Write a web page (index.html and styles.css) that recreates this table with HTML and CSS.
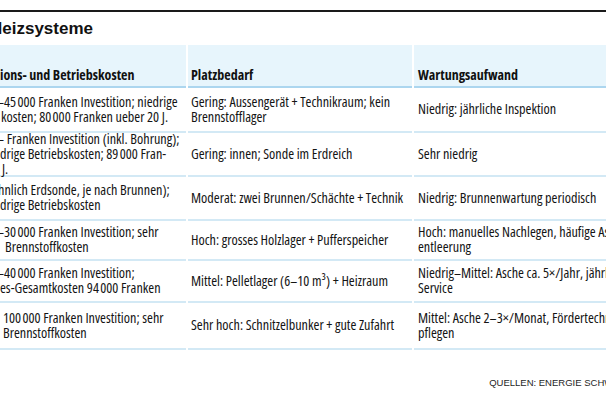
FILE: index.html
```html
<!DOCTYPE html>
<html lang="de">
<head>
<meta charset="utf-8">
<title>Heizsysteme</title>
<link rel="stylesheet" href="styles.css">
</head>
<body>
<div class="page">
  <div class="rule"></div>
  <h2 class="title">Heizsysteme</h2>
  <div class="grid">
    <div class="cell head c1">ions- und Betriebskosten</div>
    <div class="cell head c2">Platzbedarf</div>
    <div class="cell head c3">Wartungsaufwand</div>

    <div class="cell c1"><span class="ln cut">–45&#8239;000 Franken Investition; niedrige</span><span class="ln in1">kosten; 80&#8239;000 Franken ueber 20 J.</span></div>
    <div class="cell c2"><span class="ln">Gering: Aussengerät + Technikraum; kein</span><span class="ln">Brennstofflager</span></div>
    <div class="cell c3"><span class="ln">Niedrig: jährliche Inspektion</span></div>

    <div class="cell c1"><span class="ln cut">– Franken Investition (inkl. Bohrung);</span><span class="ln">drige Betriebskosten; 89&#8239;000 Fran-</span><span class="ln in2">J.</span></div>
    <div class="cell c2"><span class="ln">Gering: innen; Sonde im Erdreich</span></div>
    <div class="cell c3"><span class="ln">Sehr niedrig</span></div>

    <div class="cell c1"><span class="ln cut2">hnlich Erdsonde, je nach Brunnen);</span><span class="ln">drige Betriebskosten</span></div>
    <div class="cell c2"><span class="ln">Moderat: zwei Brunnen/Schächte + Technik</span></div>
    <div class="cell c3"><span class="ln">Niedrig: Brunnenwartung periodisch</span></div>

    <div class="cell c1"><span class="ln cut">–30&#8239;000 Franken Investition; sehr</span><span class="ln in5">Brennstoffkosten</span></div>
    <div class="cell c2"><span class="ln">Hoch: grosses Holzlager + Pufferspeicher</span></div>
    <div class="cell c3"><span class="ln">Hoch: manuelles Nachlegen, häufige Asche-</span><span class="ln">entleerung</span></div>

    <div class="cell c1"><span class="ln cut">–40&#8239;000 Franken Investition;</span><span class="ln">es-Gesamtkosten 94&#8239;000 Franken</span></div>
    <div class="cell c2"><span class="ln">Mittel: Pelletlager (6–10 m³) + Heizraum</span></div>
    <div class="cell c3"><span class="ln">Niedrig–Mittel: Asche ca. 5×/Jahr, jährlicher</span><span class="ln">Service</span></div>

    <div class="cell c1"><span class="ln in3">100&#8239;000 Franken Investition; sehr</span><span class="ln in3">Brennstoffkosten</span></div>
    <div class="cell c2"><span class="ln">Sehr hoch: Schnitzelbunker + gute Zufahrt</span></div>
    <div class="cell c3"><span class="ln">Mittel: Asche 2–3×/Monat, Fördertechnik</span><span class="ln">pflegen</span></div>
  </div>
  <p class="source">QUELLEN: ENERGIE SCHWEIZ</p>
</div>
</body>
</html>
```
FILE: styles.css
```css
html, body {
  margin: 0;
  padding: 0;
  background: #ffffff;
}
body {
  width: 606px;
  height: 402px;
  overflow: hidden;
}
.page {
  width: 628px;
  padding-top: 10px;
  font-family: "Open Sans", "Roboto", sans-serif;
  font-stretch: 75%;
  color: #141414;
}
.rule {
  height: 2px;
  background: #1a1a1a;
}
.title {
  margin: 6px 0 5px -10px;
  font: bold 17px/22px "Liberation Sans", Arial, sans-serif;
  color: #111111;
}
.grid {
  display: grid;
  grid-template-columns: 186px 224px 214px;
  grid-template-rows: 43px 45px 44px 44px 40px 42px 47px;
  column-gap: 2px;
}
.cell {
  display: flex;
  flex-direction: column;
  justify-content: center;
  border-bottom: 2px solid #d3e9f5;
  white-space: nowrap;
  font-size: 14.2px;
  line-height: 15px;
  padding-bottom: 2px;
}
.c1 { padding-left: 0; }
.c2 { padding-left: 3px; }
.c3 { padding-left: 4px; }
.head {
  background: #e7f5fc;
  border-bottom-color: #acd6ef;
  justify-content: flex-end;
  padding-bottom: 3px;
  font-weight: bold;
  font-size: 14px;
  line-height: 16px;
  color: #111111;
}
.ln { display: block; }
.cut { margin-left: -3px; }
.cut2 { margin-left: -2px; }
.in1 { margin-left: 1px; }
.in2 { margin-left: 2px; }
.in3 { margin-left: 3px; }
.in5 { margin-left: 5px; }
.source {
  margin: 27px 0 0;
  text-align: right;
  font: 9.5px/12px "Liberation Sans", Arial, sans-serif;
  font-stretch: normal;
  color: #1e1e1e;
}
```
